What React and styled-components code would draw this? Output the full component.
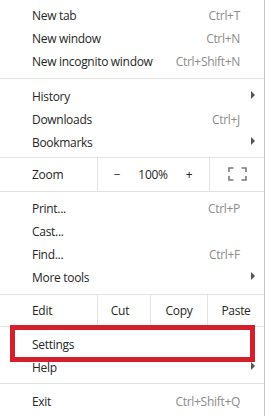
import React from "react";
import styled, { createGlobalStyle } from "styled-components";

const GlobalStyle = createGlobalStyle`
  html, body {
    margin: 0;
    padding: 0;
    background: #ffffff;
  }
  body {
    font-family: "Open Sans", "Noto Sans", "Liberation Sans", sans-serif;
    font-size: 12px;
    letter-spacing: -0.3px;
    color: #262626;
  }
`;

const Menu = styled.div`
  width: 264px;
  height: 416px;
  border-right: 1px solid #c4c4c4;
  background: #fff;
  display: flex;
  flex-direction: column;
  overflow: hidden;
`;

const Section = styled.div`
  display: flex;
  flex-direction: column;
  padding: ${(p) => p.$pad || "0"};
  position: relative;
`;

const Separator = styled.div`
  height: 1px;
  background: #e2e2e2;
`;

const Row = styled.div`
  height: 23px;
  display: flex;
  align-items: center;
  padding: 0 8px 0 32px;
  position: relative;
`;

const Label = styled.span`
  flex: 1;
  white-space: nowrap;
`;

const Shortcut = styled.span`
  color: #8c8c8c;
  margin-right: 16px;
  white-space: nowrap;
`;

const Arrow = styled.span`
  width: 0;
  height: 0;
  border-top: 4px solid transparent;
  border-bottom: 4px solid transparent;
  border-left: 4px solid #555;
  margin-right: 1px;
  margin-top: -4px;
`;

const SplitRow = styled.div`
  height: ${(p) => p.$h}px;
  display: grid;
  grid-template-columns: ${(p) => p.$cols};
  align-items: stretch;
`;

const SplitLabel = styled.div`
  display: flex;
  align-items: center;
  padding-left: 32px;
`;

const Cell = styled.div`
  display: flex;
  align-items: center;
  justify-content: ${(p) => p.$justify || "center"};
  border-left: 1px solid #e2e2e2;
  padding: ${(p) => p.$pad || "0"};
`;

const ZoomBtn = styled.span`
  width: 14px;
  text-align: center;
`;

const Highlight = styled.div`
  position: absolute;
  left: 10px;
  top: -8px;
  width: 245px;
  height: 37px;
  border: 5px solid #d51f2c;
  box-sizing: border-box;
  pointer-events: none;
`;

const FullscreenIcon = () => (
  <svg width="19" height="14" viewBox="0 0 19 14">
    <g fill="none" stroke="#7a7a7a" strokeWidth="1.6">
      <path d="M1 5V1h4.5" />
      <path d="M13.5 1H18v4" />
      <path d="M18 9v4h-4.5" />
      <path d="M5.5 13H1V9" />
    </g>
  </svg>
);

const Item = ({ label, shortcut, arrow }) => (
  <Row>
    <Label>{label}</Label>
    {shortcut && <Shortcut>{shortcut}</Shortcut>}
    {arrow && <Arrow />}
  </Row>
);

export default function App() {
  return (
    <>
      <GlobalStyle />
      <Menu>
        <Section $pad="4px 0 5px">
          <Item label="New tab" shortcut="Ctrl+T" />
          <Item label="New window" shortcut="Ctrl+N" />
          <Item label="New incognito window" shortcut="Ctrl+Shift+N" />
        </Section>
        <Separator />
        <Section $pad="6px 0 3px">
          <Item label="History" arrow />
          <Item label="Downloads" shortcut="Ctrl+J" />
          <Item label="Bookmarks" arrow />
        </Section>
        <Separator />
        <SplitRow $h={33} $cols="97px 112px 1fr">
          <SplitLabel>Zoom</SplitLabel>
          <Cell $justify="space-between" $pad="0 13px 0 12px">
            <ZoomBtn>−</ZoomBtn>
            <span>100%</span>
            <ZoomBtn>+</ZoomBtn>
          </Cell>
          <Cell $pad="0 0 1px 0">
            <FullscreenIcon />
          </Cell>
        </SplitRow>
        <Separator />
        <Section $pad="5px 0 5px">
          <Item label="Print..." shortcut="Ctrl+P" />
          <Item label="Cast..." />
          <Item label="Find..." shortcut="Ctrl+F" />
          <Item label="More tools" arrow />
        </Section>
        <Separator />
        <SplitRow $h={31} $cols="97px 53px 57px 1fr">
          <SplitLabel>Edit</SplitLabel>
          <Cell $pad="0 8px 0 0">Cut</Cell>
          <Cell>Copy</Cell>
          <Cell>Paste</Cell>
        </SplitRow>
        <Separator />
        <Section $pad="6px 0 4px">
          <Row>
            <Label>Settings</Label>
            <Highlight />
          </Row>
          <Item label="Help" arrow />
        </Section>
        <Separator />
        <Section $pad="6px 0 0">
          <Item label="Exit" shortcut="Ctrl+Shift+Q" />
        </Section>
      </Menu>
    </>
  );
}
